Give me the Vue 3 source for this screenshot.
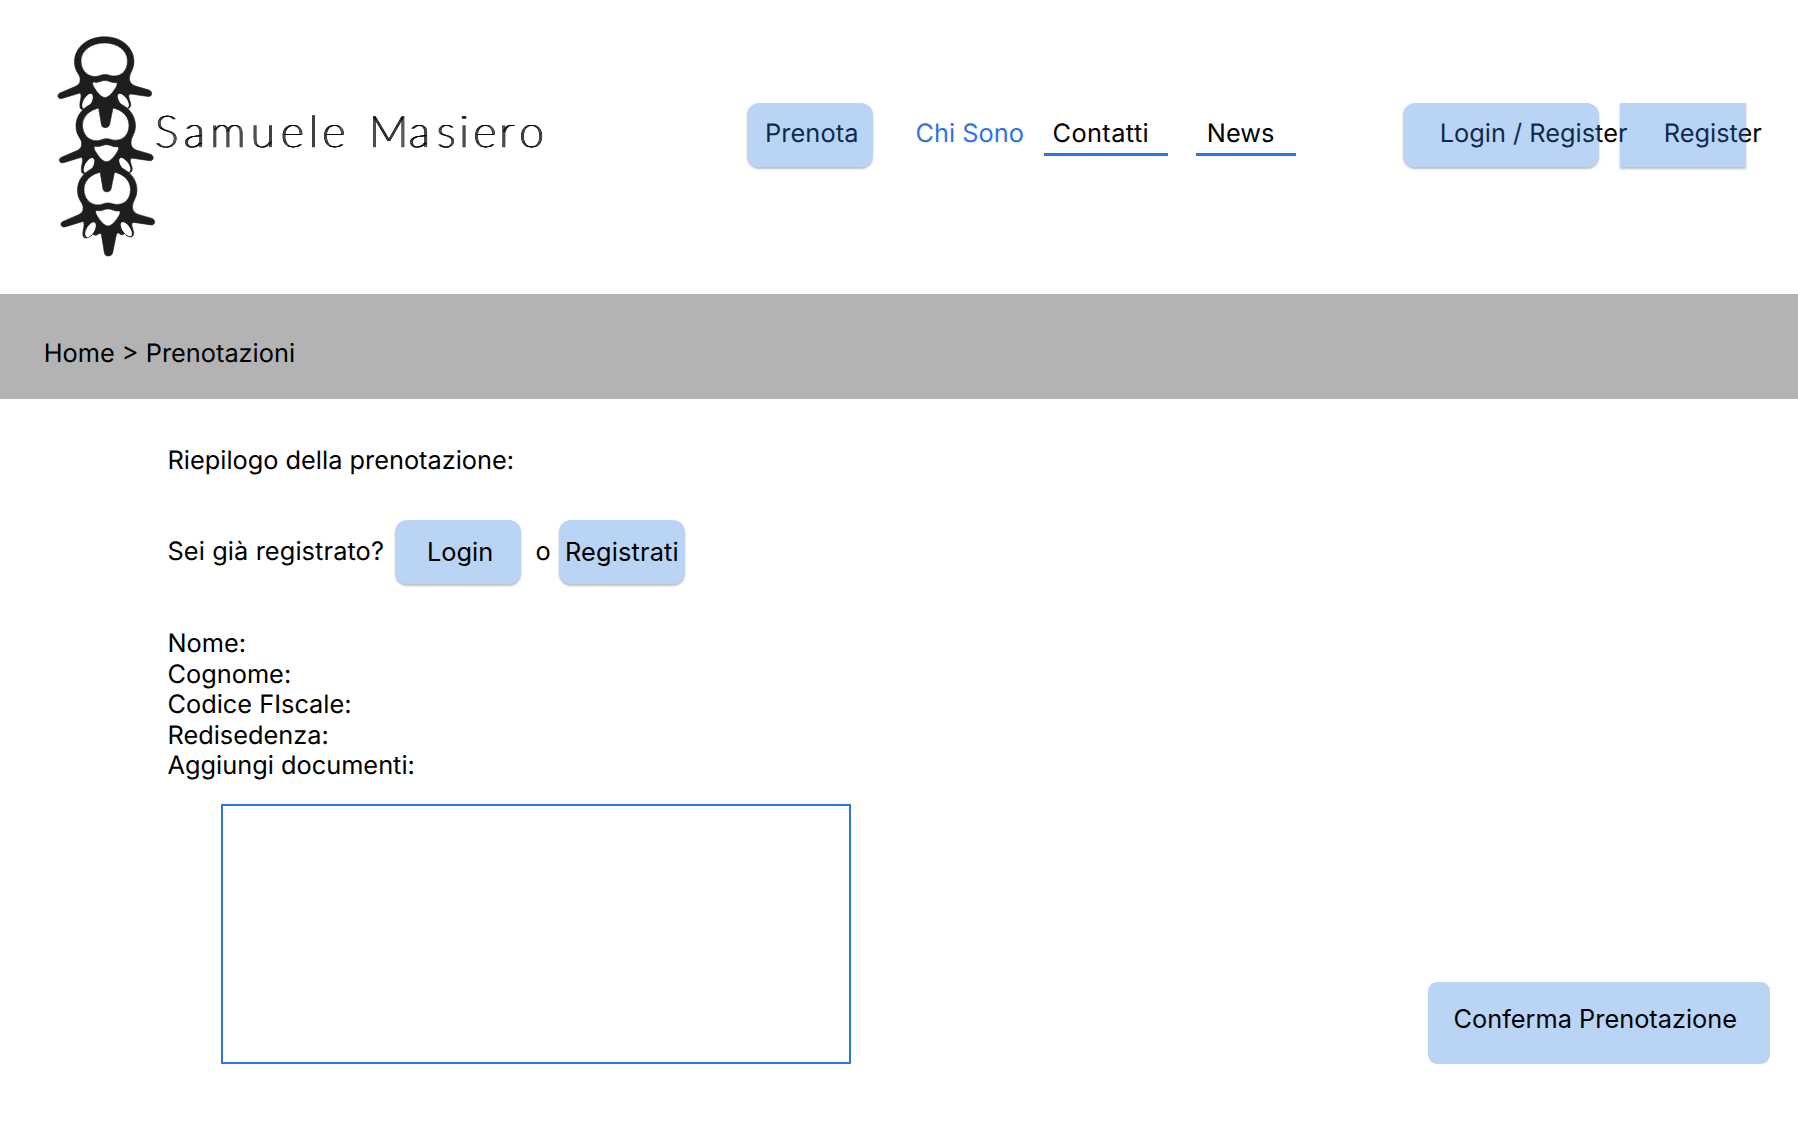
<script setup>
const nome = [154, 183, 209.5, 250, 280, 308, 321.5, 348.5, 368, 408, 436, 458.5, 472.5, 498.5, 518.5]
const campi = ['Nome:', 'Cognome:', 'Codice FIscale:', 'Redisedenza:', 'Aggiungi documenti:']
const vertebre = [0, 1, 2]
</script>

<template>
  <div class="page">
    <header>
      <svg class="brand" width="560" height="294" viewBox="0 0 560 294">
        <defs>
          <filter id="contrast" filterUnits="userSpaceOnUse" x="145" y="95" width="410" height="70">
            <feOffset in="SourceGraphic" dx="1" dy="0" result="a" />
            <feOffset in="SourceGraphic" dx="2" dy="0" result="b" />
            <feMerge>
              <feMergeNode in="SourceGraphic" />
              <feMergeNode in="a" />
              <feMergeNode in="b" />
            </feMerge>
          </filter>
          <g id="vertebra">
            <path fill="#1e1e1c" stroke="#1e1e1c" stroke-width=".6" fill-rule="evenodd" d="M104.5 36.8C121 36.8 134 47 134 62C134 69 129.500 73 129.500 78C129.500 83 132 85 137 86.500L149 90C153 91.500 152.500 97 148 96.500L131 94C127 94 129.500 99 130.500 103C131.500 107 129 109 127 108.500C124 108 122.500 106.500 121.500 105C119.500 107.500 117.500 106 115.500 104.500C113.500 104.500 113.500 106 113 108L109.500 125C108 128.500 102.500 128.500 101.500 125L98.500 107C98 104.500 97 105 95.500 105.500C93 107.500 91.500 107 90 105.500C88.500 107.500 86.500 109 83.500 109.500C80 110 79.500 107 80 103C80.500 99 82 95 80 93L62 98.500C57.500 99.500 56.500 94.500 60 93L74 87C79 85 80.500 83 80 78C79.500 74 74.500 71 74.500 62C74.500 47 88 36.800 104.500 36.800Z
              M104.500 43C92 43 81 50 81 61C81 70 87 76.500 95 76.500C99 76.500 101 74.500 105 74.500C109 74.500 110 76 114 76C122 76 127.500 70 127.500 61C127.500 50 117 43 104.500 43Z
              M94 82C98 83.500 101 80.500 105 80.500C109 80.500 112 83.500 116 82.500C118 82.500 117 86 115.500 88C113 92 109 97.500 105 97.500C101 97.500 97 92 94.500 88C93 86 91.500 82 94 82Z" />
            <ellipse cx="87.500" cy="101.300" rx="4" ry="8.300" transform="rotate(30 87.500 101.300)" fill="#fff" />
            <ellipse cx="123.300" cy="100.800" rx="3.800" ry="8.300" transform="rotate(-35 123.300 100.800)" fill="#fff" />
          </g>
        </defs>
        <use v-for="i in vertebre" :key="i" href="#vertebra" :transform="`translate(${i * 1.5} ${i * 64.200})`" />
        <text :x="nome.join(' ')" y="146.500" class="wordmark" filter="url(#contrast)">Samuele Masiero</text>
      </svg>
      <nav>
        <a class="btn veil prenota">Prenota</a>
        <a class="chi">Chi Sono</a>
        <a class="link contatti">Contatti</a>
        <a class="link news">News</a>
        <a class="btn veil login">Login / Register</a>
        <a class="btn veil square">Register</a>
      </nav>
    </header>
    <div class="crumbs">Home &gt; Prenotazioni</div>
    <main>
      <p class="title">Riepilogo della prenotazione:</p>
      <div class="account">
        <span class="ask">Sei già registrato?</span>
        <button class="btn solid accedi">Login</button>
        <span class="or">o</span>
        <button class="btn solid registrati">Registrati</button>
      </div>
      <div class="fields"><div v-for="c in campi" :key="c">{{ c }}</div></div>
      <div class="bottom">
        <div class="drop"></div>
        <button class="confirm">Conferma Prenotazione</button>
      </div>
    </main>
  </div>
</template>

<style>
body { margin: 0; background: #fff; }
</style>

<style scoped>
.page { width: 1798px; height: 1144px; overflow: hidden; background: #fff; color: #000; font: 25.35px/30.5px Inter, sans-serif; text-rendering: geometricPrecision; }
header { display: flex; height: 294.4px; }
.brand { flex: none; display: block; }
.wordmark { font: 100 44px Lato, sans-serif; fill: #000; stroke: #000; stroke-width: .25px; white-space: pre; }
nav { display: flex; align-items: flex-start; padding-top: 103px; }
nav a { flex: none; white-space: nowrap; box-sizing: border-box; }
button { font: inherit; color: inherit; border: 0; margin: 0; text-align: left; }
.btn { display: block; position: relative; flex: none; box-sizing: border-box; width: 126px; height: 64px; padding: 16px 0 0; white-space: nowrap; border-radius: 12px; box-shadow: 0 2px 2px rgba(0, 0, 0, .25); }
.veil::after { content: ''; position: absolute; inset: 0; border-radius: inherit; background: rgba(46, 125, 225, .33); }
.solid { background: #bad4f5; padding: 0; }
.prenota { margin-left: 187.300px; padding-left: 17.700px; letter-spacing: .1px; }
.chi { width: 112px; margin-left: 42.200px; padding-top: 16px; color: #2f74e0; }
.link { height: 52.500px; padding-top: 16px; border-bottom: 3px solid #2f74e0; }
.contatti { width: 124.500px; margin-left: 16.500px; padding-left: 8.500px; letter-spacing: .4px; }
.news { width: 100px; margin-left: 27.300px; padding-left: 11px; }
.login { width: 196px; margin-left: 107px; padding-left: 37px; }
.square { margin-left: 21px; padding-left: 44px; border-radius: 0; }
.crumbs { box-sizing: border-box; height: 104.600px; padding: 45px 0 0 43.700px; background: #b3b3b3; }
main { padding-left: 167.500px; }
.title { margin: 0; padding-top: 47px; }
.account { display: flex; align-items: flex-start; margin-top: 43.500px; }
.ask { width: 227px; padding-top: 17px; letter-spacing: .1px; }
.accedi { padding-left: 32.500px; }
.or { width: 38px; box-sizing: border-box; padding: 17px 0 0 15px; }
.registrati { padding-left: 6.500px; letter-spacing: .15px; }
.fields { margin-top: 45.500px; }
.bottom { display: flex; align-items: flex-end; margin: 22px 0 0 53.500px; }
.drop { box-sizing: border-box; width: 630px; height: 260px; border: 2px solid #2f74e0; }
.confirm { box-sizing: border-box; width: 342.500px; height: 82px; margin-left: 576.500px; padding: 0 0 8px 26px; border-radius: 9px; background: #bad4f5; white-space: nowrap; }
</style>
